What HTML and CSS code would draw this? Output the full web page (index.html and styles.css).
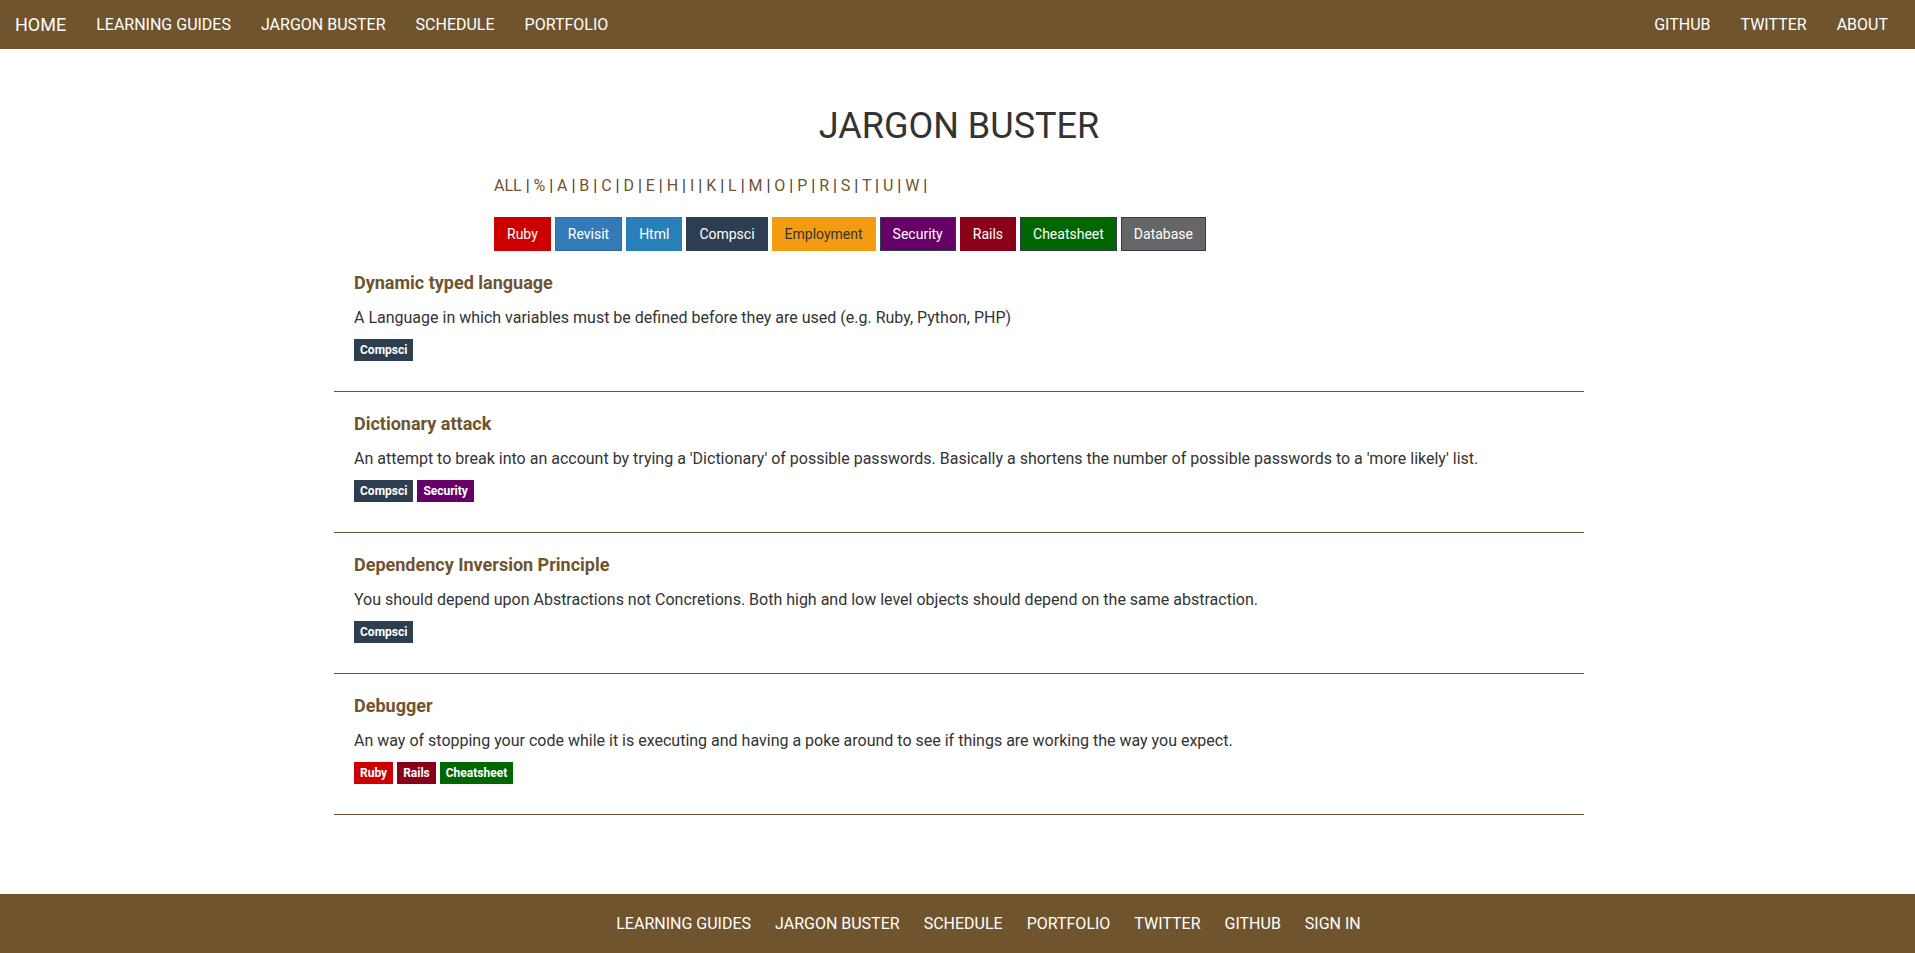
FILE: index.html
```html
<!DOCTYPE html>
<html>
<head>
<meta charset="utf-8">
<title>Jargon Buster</title>
<link rel="stylesheet" href="styles.css">
</head>
<body>
<nav class="topbar">
  <div class="nav-left">
    <a class="brand" href="#">HOME</a>
    <a class="nav-link" href="#">LEARNING GUIDES</a>
    <a class="nav-link" href="#">JARGON BUSTER</a>
    <a class="nav-link" href="#">SCHEDULE</a>
    <a class="nav-link" href="#">PORTFOLIO</a>
  </div>
  <div class="nav-right">
    <a class="nav-link" href="#">GITHUB</a>
    <a class="nav-link" href="#">TWITTER</a>
    <a class="nav-link" href="#">ABOUT</a>
  </div>
</nav>

<main class="container">
  <h1 class="page-title">JARGON BUSTER</h1>

  <div class="filters">
    <div class="alphabet">
      <a href="#">ALL</a> | <a href="#">%</a> | <a href="#">A</a> | <a href="#">B</a> | <a href="#">C</a> | <a href="#">D</a> | <a href="#">E</a> | <a href="#">H</a> | <a href="#">I</a> | <a href="#">K</a> | <a href="#">L</a> | <a href="#">M</a> | <a href="#">O</a> | <a href="#">P</a> | <a href="#">R</a> | <a href="#">S</a> | <a href="#">T</a> | <a href="#">U</a> | <a href="#">W</a> |
    </div>
    <div class="categories">
      <a class="btn ruby" href="#">Ruby</a>
      <a class="btn revisit" href="#">Revisit</a>
      <a class="btn html" href="#">Html</a>
      <a class="btn compsci" href="#">Compsci</a>
      <a class="btn employment" href="#">Employment</a>
      <a class="btn security" href="#">Security</a>
      <a class="btn rails" href="#">Rails</a>
      <a class="btn cheatsheet" href="#">Cheatsheet</a>
      <a class="btn database" href="#">Database</a>
    </div>
  </div>

  <section class="entries">
    <article class="entry">
      <h3 class="entry-title">Dynamic typed language</h3>
      <p class="entry-text">A Language in which variables must be defined before they are used (e.g. Ruby, Python, PHP)</p>
      <div class="tags">
        <a class="tag compsci" href="#">Compsci</a>
      </div>
    </article>
    <article class="entry">
      <h3 class="entry-title">Dictionary attack</h3>
      <p class="entry-text">An attempt to break into an account by trying a 'Dictionary' of possible passwords. Basically a shortens the number of possible passwords to a 'more likely' list.</p>
      <div class="tags">
        <a class="tag compsci" href="#">Compsci</a>
        <a class="tag security" href="#">Security</a>
      </div>
    </article>
    <article class="entry">
      <h3 class="entry-title">Dependency Inversion Principle</h3>
      <p class="entry-text">You should depend upon Abstractions not Concretions. Both high and low level objects should depend on the same abstraction.</p>
      <div class="tags">
        <a class="tag compsci" href="#">Compsci</a>
      </div>
    </article>
    <article class="entry">
      <h3 class="entry-title">Debugger</h3>
      <p class="entry-text">An way of stopping your code while it is executing and having a poke around to see if things are working the way you expect.</p>
      <div class="tags">
        <a class="tag ruby" href="#">Ruby</a>
        <a class="tag rails" href="#">Rails</a>
        <a class="tag cheatsheet" href="#">Cheatsheet</a>
      </div>
    </article>
  </section>
</main>

<footer class="footer">
  <a href="#">LEARNING GUIDES</a>
  <a href="#">JARGON BUSTER</a>
  <a href="#">SCHEDULE</a>
  <a href="#">PORTFOLIO</a>
  <a href="#">TWITTER</a>
  <a href="#">GITHUB</a>
  <a href="#">SIGN IN</a>
</footer>
</body>
</html>
```

FILE: styles.css
```css
* { box-sizing: border-box; }

html, body {
  margin: 0;
  padding: 0;
}

body {
  font-family: Roboto, "Liberation Sans", Arial, sans-serif;
  color: #333;
  background: #fff;
  font-size: 16px;
}

a { text-decoration: none; }

/* ---------- top navigation ---------- */
.topbar {
  display: flex;
  justify-content: space-between;
  align-items: center;
  height: 49px;
  background: #6f542e;
  padding: 0 12px 0 0;
}

.nav-left, .nav-right {
  display: flex;
  align-items: center;
}

.brand {
  color: #fff;
  font-size: 18px;
  line-height: 20px;
  padding: 0 15px 0 15px;
}

.nav-link {
  color: #fff;
  font-size: 16px;
  line-height: 20px;
  padding: 0 15px;
}

/* ---------- main ---------- */
.container {
  width: 1250px;
  margin-left: calc(50% - 623.5px);
  padding-bottom: 79px;
}

.page-title {
  margin: 57px 0 0;
  font-size: 36px;
  line-height: 40px;
  font-weight: 400;
  text-align: center;
  color: #333;
}

.filters {
  margin-left: 160px;
}

.alphabet {
  margin-top: 29px;
  font-size: 16px;
  line-height: 21px;
  color: #333;
}

.alphabet a {
  color: #6f542e;
}

.categories {
  display: flex;
  gap: 4px;
  margin-top: 21px;
}

.btn {
  display: inline-block;
  font-size: 14px;
  line-height: 20px;
  padding: 6px 12px;
  border: 1px solid transparent;
  color: #fff;
}

.ruby { background: #cc0000; border-color: #cc0000; }
.revisit { background: #337ab7; border-color: #2e6da4; }
.html { background: #2980b9; border-color: #2980b9; }
.compsci { background: #2c3e50; border-color: #2c3e50; }
.employment { background: #f39c12; border-color: #f39c12; color: #333; }
.security { background: #660066; border-color: #2c3e50; }
.rails { background: #8b0019; border-color: #8b0019; }
.cheatsheet { background: #006600; border-color: #2c3e50; }
.database { background: #666666; border-color: #2c3e50; }

/* ---------- entries ---------- */
.entry {
  padding: 22px 20px 30px;
  border-bottom: 1px solid #6f542e;
}

.entry-title {
  margin: 0 0 14px;
  font-size: 18px;
  line-height: 20px;
  font-weight: 700;
  color: #6f542e;
}

.entry-text {
  margin: 0 0 11px;
  font-size: 16px;
  line-height: 21px;
  color: #333;
}

.tags {
  display: flex;
  gap: 4px;
}

.tag {
  display: inline-block;
  font-size: 12px;
  line-height: 18px;
  padding: 1px 5px;
  border: 1px solid transparent;
  font-weight: 700;
  color: #fff;
}

/* ---------- footer ---------- */
.footer {
  display: flex;
  justify-content: center;
  align-items: center;
  gap: 24px;
  height: 60px;
  padding-left: 62px;
  background: #6f542e;
}

.footer a {
  color: #fff;
  font-size: 16px;
  line-height: 20px;
}
```
